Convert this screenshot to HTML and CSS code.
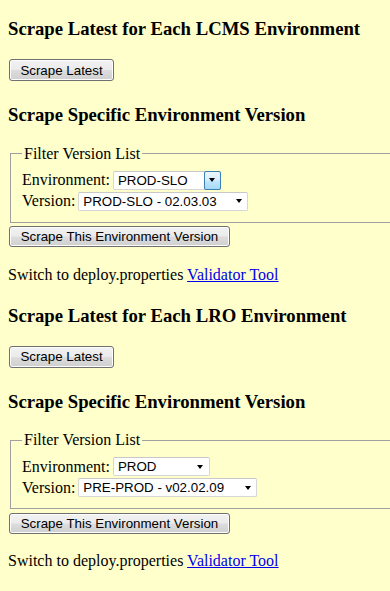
FILE: index.html
```html
<!DOCTYPE html>
<html>
<head>
<meta charset="utf-8">
<title>Scrape</title>
<link rel="stylesheet" href="styles.css">
</head>
<body>
<h3 class="title title-lead">Scrape Latest for Each LCMS Environment</h3>
<form class="latest"><button type="button" class="btn btn-latest">Scrape Latest</button></form>
<h3 class="title title-specific">Scrape Specific Environment Version</h3>
<form class="specific">
  <fieldset class="filter">
    <legend class="legend">Filter Version List</legend>
    <div class="row"><label class="lbl">Environment:</label><span class="sel hot env-lcms" role="combobox"><span class="sel-text">PROD-SLO</span><span class="sel-arrow"></span></span></div>
    <div class="row"><label class="lbl">Version:</label><span class="sel ver-lcms" role="combobox"><span class="sel-text">PROD-SLO - 02.03.03</span><span class="sel-arrow"></span></span></div>
  </fieldset>
  <button type="button" class="btn btn-env">Scrape This Environment Version</button>
</form>
<p class="switch">Switch to deploy.properties <a href="#" class="link">Validator Tool</a></p>

<h3 class="title title-section">Scrape Latest for Each LRO Environment</h3>
<form class="latest"><button type="button" class="btn btn-latest">Scrape Latest</button></form>
<h3 class="title title-specific">Scrape Specific Environment Version</h3>
<form class="specific">
  <fieldset class="filter">
    <legend class="legend">Filter Version List</legend>
    <div class="row"><label class="lbl">Environment:</label><span class="sel env-lro" role="combobox"><span class="sel-text">PROD</span><span class="sel-arrow"></span></span></div>
    <div class="row"><label class="lbl">Version:</label><span class="sel ver-lro" role="combobox"><span class="sel-text">PRE-PROD - v02.02.09</span><span class="sel-arrow"></span></span></div>
  </fieldset>
  <button type="button" class="btn btn-env">Scrape This Environment Version</button>
</form>
<p class="switch">Switch to deploy.properties <a href="#" class="link">Validator Tool</a></p>
</body>
</html>
```

FILE: styles.css
```css
html {
  background: #ffffcc;
}
body {
  margin: 0;
  padding: 0 8px;
  background: #ffffcc;
  color: #000;
  font-family: "Liberation Serif", "Times New Roman", serif;
  font-size: 16px;
}
.title {
  font-size: 18.72px;
  font-weight: bold;
  margin: 0;
  line-height: 21px;
  white-space: nowrap;
}
.title-lead { margin-top: 18.3px; }
.title-specific { margin-top: 23px; }
.title-section { margin-top: 20.6px; }
.latest {
  margin: 20px 0 0;
}
.btn {
  display: block;
  box-sizing: border-box;
  font-family: "Liberation Sans", Arial, sans-serif;
  font-size: 13.33px;
  color: #000;
  padding: 0 10px;
  margin: 0 0 0 1px;
  border: 1px solid #707070;
  border-radius: 3px;
  background: linear-gradient(#f2f2f2 0%, #ebebeb 48%, #dddddd 52%, #cfcfcf 100%);
  box-shadow: inset 0 0 0 1px #fcfcfc;
  white-space: nowrap;
}
.btn-latest { width: 105px; height: 22px; }
.btn-env { width: 221px; height: 21px; margin-top: 3.5px; }
.specific { margin: 19.5px 0 0; }
.filter {
  margin: 0 -8px 0 2px;
  padding: 8px 12px 11px 11px;
  border: 1px solid #a0a0a0;
  border-right: none;
  display: flex;
  flex-direction: column;
  gap: 2px;
}
.legend {
  padding: 0 2px;
  margin-left: 0;
  line-height: 18px;
}
.row {
  display: flex;
  align-items: center;
  height: 19px;
  gap: 3px;
}
.lbl { line-height: 18px; }
.sel {
  display: inline-flex;
  align-items: stretch;
  box-sizing: border-box;
  height: 19px;
  border: 1px solid #d6d6d6;
  border-top-color: #c8c8c8;
  border-radius: 2px;
  background: #fff;
  color: #000;
  font-family: "Liberation Sans", Arial, sans-serif;
  font-size: 13.33px;
  line-height: 17px;
}
.sel-text {
  flex: 1;
  padding-left: 4px;
  white-space: nowrap;
  overflow: hidden;
}
.sel-arrow {
  width: 17px;
  display: flex;
  align-items: center;
  justify-content: center;
}
.sel-arrow::before {
  content: "";
  width: 0;
  height: 0;
  border-left: 3.5px solid transparent;
  border-right: 3.5px solid transparent;
  border-top: 4px solid #000;
}
.hot .sel-arrow {
  box-sizing: border-box;
  width: 17px;
  margin: -1px -1px -1px 0;
  border: 1px solid #3c7fb1;
  border-radius: 2px;
  background: linear-gradient(#eaf6fd 0%, #d9f0fc 45%, #bee6fd 55%, #a7d9f5 100%);
}
.env-lcms { width: 108px; }
.ver-lcms { width: 170px; }
.env-lro { width: 97px; }
.ver-lro { width: 179px; }
.switch {
  margin: 18.7px 0 0 0;
  line-height: 18px;
}
.link { color: #0000ee; text-decoration: underline; }
```
